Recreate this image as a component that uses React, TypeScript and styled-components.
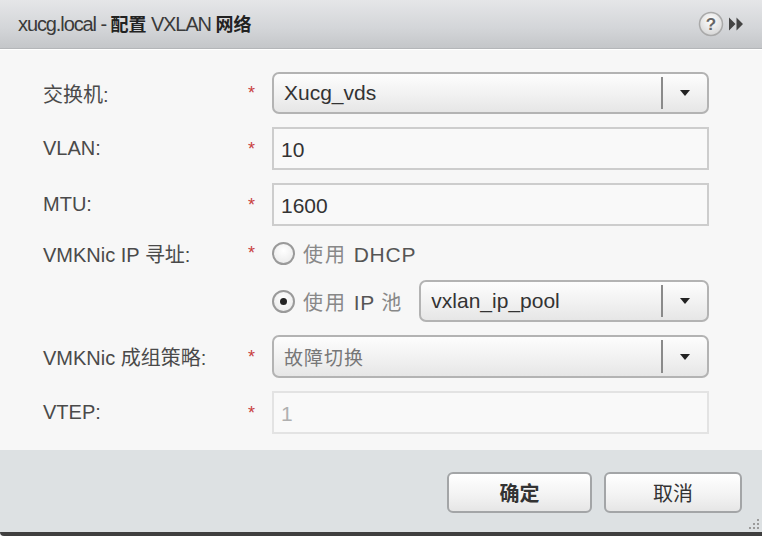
import * as React from "react";
import styled, { createGlobalStyle } from "styled-components";

const GlobalStyle = createGlobalStyle`
  html, body {
    margin: 0;
    padding: 0;
    background: #f7f7f7;
  }
  body {
    font-family: "Liberation Sans", Arial, "Noto Sans CJK SC", sans-serif;
  }
`;

const Dialog = styled.div`
  width: 762px;
  height: 536px;
  display: flex;
  flex-direction: column;
  background: #f7f7f7;
  overflow: hidden;
`;

const Header = styled.div`
  height: 48px;
  flex: none;
  display: flex;
  align-items: center;
  padding: 0 18px 0 18px;
  background: linear-gradient(#e5e6e8, #d3d5d8 60%, #c4c6c9);
  border-bottom: 1px solid #b4b6b9;
  box-shadow: 0 1px 0 #ffffff;
`;

const Title = styled.div`
  flex: 1;
  font-size: 20px;
  letter-spacing: -1.1px;
  color: #3a3a3a;
  margin-top: -2px;

  b {
    font-weight: bold;
    font-size: 18px;
    letter-spacing: 0;
    color: #222;
  }
`;

const HeaderIcons = styled.div`
  display: flex;
  align-items: center;
  gap: 4px;
`;

const Body = styled.div`
  flex: 1;
  padding: 23px 53px 0 43px;
`;

const Form = styled.div`
  display: grid;
  grid-template-columns: 205px 24px 1fr;
  grid-template-rows: 42px 43px 43px 28px 42px 43px 43px;
  row-gap: 13px;
  align-items: center;
`;

const Label = styled.div`
  font-size: 20px;
  color: #4a4a4a;
  white-space: nowrap;
`;

const Required = styled.span`
  color: #c94040;
  font-size: 18px;
  text-align: left;
  line-height: 1;
`;

const TextField = styled.div<{ disabled?: boolean }>`
  height: 100%;
  box-sizing: border-box;
  border: 2px solid ${(p) => (p.disabled ? "#e3e3e3" : "#cdcdcd")};
  background: #f9f9f9;
  display: flex;
  align-items: center;
  padding-left: 7px;
  padding-top: 2px;
  font-size: 21px;
  color: ${(p) => (p.disabled ? "#b0b0b0" : "#333")};
`;

const SelectBox = styled.div`
  flex: 1;
  align-self: stretch;
  height: 100%;
  box-sizing: border-box;
  border: 2px solid #b3b3b3;
  border-radius: 7px;
  background: linear-gradient(#fdfdfd, #f1f1f1 55%, #e6e6e6);
  display: flex;
  align-items: stretch;
  font-size: 21px;
  color: #333;
  min-width: 0;
`;

const SelectValue = styled.div<{ muted?: boolean }>`
  flex: 1;
  display: flex;
  align-items: center;
  padding-left: 10px;
  color: ${(p) => (p.muted ? "#777" : "#333")};
  font-size: ${(p) => (p.muted ? "19px" : "21px")};
  letter-spacing: ${(p) => (p.muted ? "1px" : "0")};
`;

const SelectArrow = styled.div`
  width: 44px;
  flex: none;
  border-left: 2px solid #8a8a8a;
  margin: 3px 0;
  display: flex;
  align-items: center;
  justify-content: center;

  &::after {
    content: "";
    border-left: 5px solid transparent;
    border-right: 5px solid transparent;
    border-top: 6px solid #222;
  }
`;

const RadioLine = styled.div`
  display: flex;
  align-items: center;
  height: 100%;
  gap: 8px;
`;

const Radio = styled.span<{ checked?: boolean }>`
  width: 23px;
  height: 23px;
  box-sizing: border-box;
  border-radius: 50%;
  border: 2px solid #9a9a9a;
  background: radial-gradient(circle at 50% 35%, #ffffff, #e7e7e7);
  display: inline-flex;
  align-items: center;
  justify-content: center;
  flex: none;

  &::after {
    content: "";
    width: 7px;
    height: 7px;
    border-radius: 50%;
    background: #222;
    display: ${(p) => (p.checked ? "block" : "none")};
  }
`;

const RadioText = styled.span`
  font-size: 21px;
  letter-spacing: 0.8px;
  color: #555;
  white-space: nowrap;
  margin-right: 8px;

  em {
    font-style: normal;
    color: #888;
    font-size: 20px;
    letter-spacing: 2px;
  }
`;

const Footer = styled.div`
  height: 86px;
  flex: none;
  box-sizing: border-box;
  background: #dde1e3;
  border-bottom: 4px solid #3f3f3f;
  border-bottom-left-radius: 4px;
  display: flex;
  align-items: flex-start;
  justify-content: flex-end;
  padding: 22px 20px 0 0;
  gap: 12px;
  position: relative;
`;

const Button = styled.div<{ width: number; strong?: boolean }>`
  width: ${(p) => p.width}px;
  height: 41px;
  box-sizing: border-box;
  border: 2px solid #a3a5a7;
  border-radius: 6px;
  background: linear-gradient(#ffffff, #f2f2f2 60%, #e6e6e6);
  display: flex;
  align-items: center;
  justify-content: center;
  font-size: 20px;
  color: #333;
  font-weight: ${(p) => (p.strong ? "bold" : "normal")};
`;

const Grip = styled.svg`
  position: absolute;
  right: 2px;
  bottom: 2px;
`;

const HelpIcon = () => (
  <svg width="26" height="26" viewBox="0 0 26 26">
    <defs>
      <radialGradient id="hg" cx="50%" cy="35%" r="65%">
        <stop offset="0%" stopColor="#ffffff" />
        <stop offset="100%" stopColor="#d6d6d6" />
      </radialGradient>
    </defs>
    <circle cx="13" cy="13" r="11.5" fill="url(#hg)" stroke="#a9a9a9" strokeWidth="1.5" />
    <text x="13" y="19" textAnchor="middle" fontSize="17" fontWeight="bold" fill="#666" fontFamily="Liberation Sans, sans-serif">
      ?
    </text>
  </svg>
);

const ForwardIcon = () => (
  <svg width="16" height="16" viewBox="0 0 16 16">
    <path d="M1 1.5 L7.5 8 L1 14.5 Z M8.5 1.5 L15 8 L8.5 14.5 Z" fill="#444" />
  </svg>
);

const Select = ({ value, muted }: { value: string; muted?: boolean }) => (
  <SelectBox>
    <SelectValue muted={muted}>{value}</SelectValue>
    <SelectArrow />
  </SelectBox>
);

const Star = () => <Required>*</Required>;

export default function App() {
  return (
    <>
      <GlobalStyle />
      <Dialog>
        <Header>
          <Title>
            xucg.local - <b>配置</b> VXLAN <b>网络</b>
          </Title>
          <HeaderIcons>
            <HelpIcon />
            <ForwardIcon />
          </HeaderIcons>
        </Header>

        <Body>
          <Form>
            <Label>交换机:</Label>
            <Star />
            <Select value="Xucg_vds" />

            <Label>VLAN:</Label>
            <Star />
            <TextField>10</TextField>

            <Label>MTU:</Label>
            <Star />
            <TextField>1600</TextField>

            <Label>VMKNic IP 寻址:</Label>
            <Star />
            <RadioLine>
              <Radio />
              <RadioText>
                <em>使用</em> DHCP
              </RadioText>
            </RadioLine>

            <span />
            <span />
            <RadioLine>
              <Radio checked />
              <RadioText>
                <em>使用</em> IP <em>池</em>
              </RadioText>
              <Select value="vxlan_ip_pool" />
            </RadioLine>

            <Label>VMKNic 成组策略:</Label>
            <Star />
            <Select value="故障切换" muted />

            <Label>VTEP:</Label>
            <Star />
            <TextField disabled>1</TextField>
          </Form>
        </Body>

        <Footer>
          <Button width={145} strong>
            确定
          </Button>
          <Button width={138}>取消</Button>
          <Grip width="12" height="12" viewBox="0 0 12 12">
            <g fill="#9a9a9a">
              <rect x="9" y="1" width="2" height="2" />
              <rect x="5" y="5" width="2" height="2" />
              <rect x="9" y="5" width="2" height="2" />
              <rect x="1" y="9" width="2" height="2" />
              <rect x="5" y="9" width="2" height="2" />
              <rect x="9" y="9" width="2" height="2" />
            </g>
          </Grip>
        </Footer>
      </Dialog>
    </>
  );
}
